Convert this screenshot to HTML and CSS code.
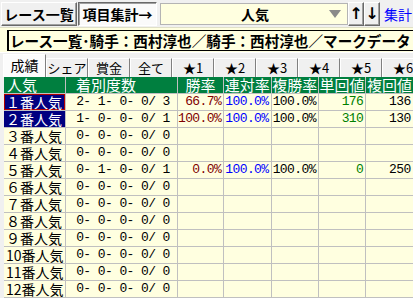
FILE: index.html
```html
<!DOCTYPE html>
<html>
<head>
  <meta charset="utf-8">
  <link rel="stylesheet" href="styles.css">
</head>
<body>
  <div class="toolbar">
    <button class="btn btn-list">レース一覧</button>
    <button class="btn btn-sum">項目集計→</button>
    <div class="select">
      <span class="select-value">人気</span>
      <span class="caret"></span>
    </div>
    <button class="arrow">↑</button>
    <button class="arrow">↓</button>
    <a class="link">集計</a>
  </div>

  <div class="titlebar">
    <div class="title">レース一覧･騎手：西村淳也／騎手：西村淳也／マークデータ</div>
  </div>

  <div class="tabs">
    <div class="tab active">成績</div>
    <div class="tab">シェア</div>
    <div class="tab">賞金</div>
    <div class="tab">全て</div>
    <div class="tab">★1</div>
    <div class="tab">★2</div>
    <div class="tab">★3</div>
    <div class="tab">★4</div>
    <div class="tab">★5</div>
    <div class="tab">★6</div>
  </div>

  <div class="grid-wrap">
    <table class="grid">
      <colgroup>
        <col class="c-pop"><col class="c-count"><col class="c-win">
        <col class="c-num"><col class="c-num"><col class="c-num"><col class="c-num"><col class="c-num">
      </colgroup>
      <thead>
        <tr>
          <th class="h-left">人気</th>
          <th class="h-count">着別度数</th>
          <th>勝率</th>
          <th>連対率</th>
          <th>複勝率</th>
          <th>単回値</th>
          <th>複回値</th>
          <th></th>
        </tr>
      </thead>
      <tbody>
        <tr>
          <td class="pop sel focus">１番人気</td>
          <td class="count"> 2- 1- 0- 0/ 3</td>
          <td class="num red">66.7%</td>
          <td class="num blue">100.0%</td>
          <td class="num">100.0%</td>
          <td class="num green">176</td>
          <td class="num">136</td>
          <td></td>
        </tr>
        <tr>
          <td class="pop sel">２番人気</td>
          <td class="count"> 1- 0- 0- 0/ 1</td>
          <td class="num red">100.0%</td>
          <td class="num blue">100.0%</td>
          <td class="num">100.0%</td>
          <td class="num green">310</td>
          <td class="num">130</td>
          <td></td>
        </tr>
        <tr>
          <td class="pop">３番人気</td>
          <td class="count"> 0- 0- 0- 0/ 0</td>
          <td></td><td></td><td></td><td></td><td></td><td></td>
        </tr>
        <tr>
          <td class="pop">４番人気</td>
          <td class="count"> 0- 0- 0- 0/ 0</td>
          <td></td><td></td><td></td><td></td><td></td><td></td>
        </tr>
        <tr>
          <td class="pop">５番人気</td>
          <td class="count"> 0- 1- 0- 0/ 1</td>
          <td class="num red">0.0%</td>
          <td class="num blue">100.0%</td>
          <td class="num">100.0%</td>
          <td class="num green">0</td>
          <td class="num">250</td>
          <td></td>
        </tr>
        <tr>
          <td class="pop">６番人気</td>
          <td class="count"> 0- 0- 0- 0/ 0</td>
          <td></td><td></td><td></td><td></td><td></td><td></td>
        </tr>
        <tr>
          <td class="pop">７番人気</td>
          <td class="count"> 0- 0- 0- 0/ 0</td>
          <td></td><td></td><td></td><td></td><td></td><td></td>
        </tr>
        <tr>
          <td class="pop">８番人気</td>
          <td class="count"> 0- 0- 0- 0/ 0</td>
          <td></td><td></td><td></td><td></td><td></td><td></td>
        </tr>
        <tr>
          <td class="pop">９番人気</td>
          <td class="count"> 0- 0- 0- 0/ 0</td>
          <td></td><td></td><td></td><td></td><td></td><td></td>
        </tr>
        <tr>
          <td class="pop">10番人気</td>
          <td class="count"> 0- 0- 0- 0/ 0</td>
          <td></td><td></td><td></td><td></td><td></td><td></td>
        </tr>
        <tr>
          <td class="pop">11番人気</td>
          <td class="count"> 0- 0- 0- 0/ 0</td>
          <td></td><td></td><td></td><td></td><td></td><td></td>
        </tr>
        <tr>
          <td class="pop">12番人気</td>
          <td class="count"> 0- 0- 0- 0/ 0</td>
          <td></td><td></td><td></td><td></td><td></td><td></td>
        </tr>
      </tbody>
    </table>
  </div>
</body>
</html>
```

FILE: styles.css
```css
body {
  margin: 0;
  width: 413px;
  height: 298px;
  overflow: hidden;
  background: #f0f0f0;
  font-family: "Noto Sans CJK JP", sans-serif;
  color: #000;
}
.toolbar {
  display: flex;
  align-items: center;
  height: 27px;
  padding-left: 1px;
}
.btn {
  height: 24px;
  padding: 0;
  font: bold 14px "Noto Sans CJK JP", sans-serif;
  line-height: 20px;
  border: 1px solid;
  border-color: #fff #696969 #696969 #fff;
  box-shadow: inset -1px -1px #a0a0a0;
  background: #f0f0f0;
  color: #000;
}
.btn-list {
  width: 76px;
}
.btn-sum {
  width: 79px;
  margin-left: 1px;
  background: #fafafa;
  border-color: #696969 #fff #fff #696969;
  box-shadow: inset 1px 1px #a0a0a0;
}
.select {
  display: flex;
  align-items: center;
  width: 188px;
  height: 22px;
  margin-left: 3px;
  box-sizing: border-box;
  border: 1px solid #b4b4b4;
  background: #ffffe0;
}
.select-value {
  flex: 1;
  padding-left: 20px;
  text-align: center;
  font-weight: bold;
  font-size: 14px;
}
.caret {
  width: 0;
  height: 0;
  margin-right: 6px;
  border-left: 6px solid transparent;
  border-right: 6px solid transparent;
  border-top: 8px solid #8a8a8a;
}
.arrow {
  width: 16px;
  height: 24px;
  padding: 0;
  font: bold 16px "DejaVu Sans", sans-serif;
  border: 1px solid;
  border-color: #fff #696969 #696969 #fff;
  box-shadow: inset -1px -1px #a0a0a0;
  background: #f0f0f0;
  color: #000;
}
.arrow:first-of-type {
  margin-left: 3px;
}
.link {
  margin-left: 4px;
  color: #0000ff;
  font-size: 14px;
}
.titlebar {
  height: 25px;
  background: #ffffe0;
  border-top: 1px solid #e0e0c8;
  padding: 2px 0 0 7px;
  box-sizing: border-box;
}
.title {
  height: 21px;
  box-sizing: border-box;
  border: 1px solid #000;
  border-left-width: 2px;
  border-right: none;
  padding-left: 1px;
  font-weight: bold;
  font-size: 14.6px;
  line-height: 19px;
  white-space: nowrap;
  overflow: hidden;
}
.tabs {
  display: flex;
  align-items: flex-end;
  height: 25px;
  padding-left: 3px;
  border-top: 1px solid #fff;
  box-sizing: border-box;
}
.tab {
  width: 42px;
  height: 19px;
  box-sizing: border-box;
  border-left: 1px solid #fff;
  border-right: 1px solid #808080;
  border-top: 1px solid #fff;
  background: #f0f0f0;
  text-align: center;
  font-size: 13px;
  line-height: 17px;
  white-space: nowrap;
  flex-shrink: 0;
}
.tab.active {
  width: 43px;
  height: 23px;
  background: #fcfcfc;
  line-height: 21px;
  font-size: 14px;
}
.grid-wrap {
  padding-left: 4px;
}
.grid {
  border-collapse: collapse;
  table-layout: fixed;
  width: 457px;
}
.c-pop { width: 61px; }
.c-count { width: 111px; }
.c-win { width: 46px; }
.c-num { width: 47px; }
.grid th {
  height: 16px;
  padding: 0;
  background: #007f3f;
  color: #fff;
  font-weight: normal;
  font-size: 15px;
  line-height: 16px;
  text-align: center;
  border-right: 1px solid #c0c0c0;
  border-bottom: 1px solid #c0c0c0;
  white-space: nowrap;
}
.grid th.h-left {
  text-align: left;
  padding-left: 3px;
}
.grid th.h-count {
  text-align: left;
  padding-left: 10px;
}
.grid td {
  height: 16px;
  padding: 0;
  background: #ffffe0;
  border-right: 1px solid #c0c0c0;
  border-bottom: 1px solid #c0c0c0;
  font-family: "Liberation Mono", "Noto Sans CJK JP", monospace;
  font-size: 13px;
  letter-spacing: -0.6px;
  line-height: 16px;
  white-space: pre;
}
.grid td.pop {
  font-family: "Noto Sans CJK JP", sans-serif;
  font-size: 14px;
  letter-spacing: 0;
  padding-left: 2px;
}
.grid td.sel {
  background: #000080;
  color: #fff;
}
.grid td.focus {
  box-shadow: inset 0 0 0 1px #b00000;
}
.grid td.count {
  padding-left: 3px;
}
.grid td.num {
  text-align: right;
  padding-right: 2px;
}
.red { color: #800000; }
.blue { color: #0000ff; }
.green { color: #008000; }
```
